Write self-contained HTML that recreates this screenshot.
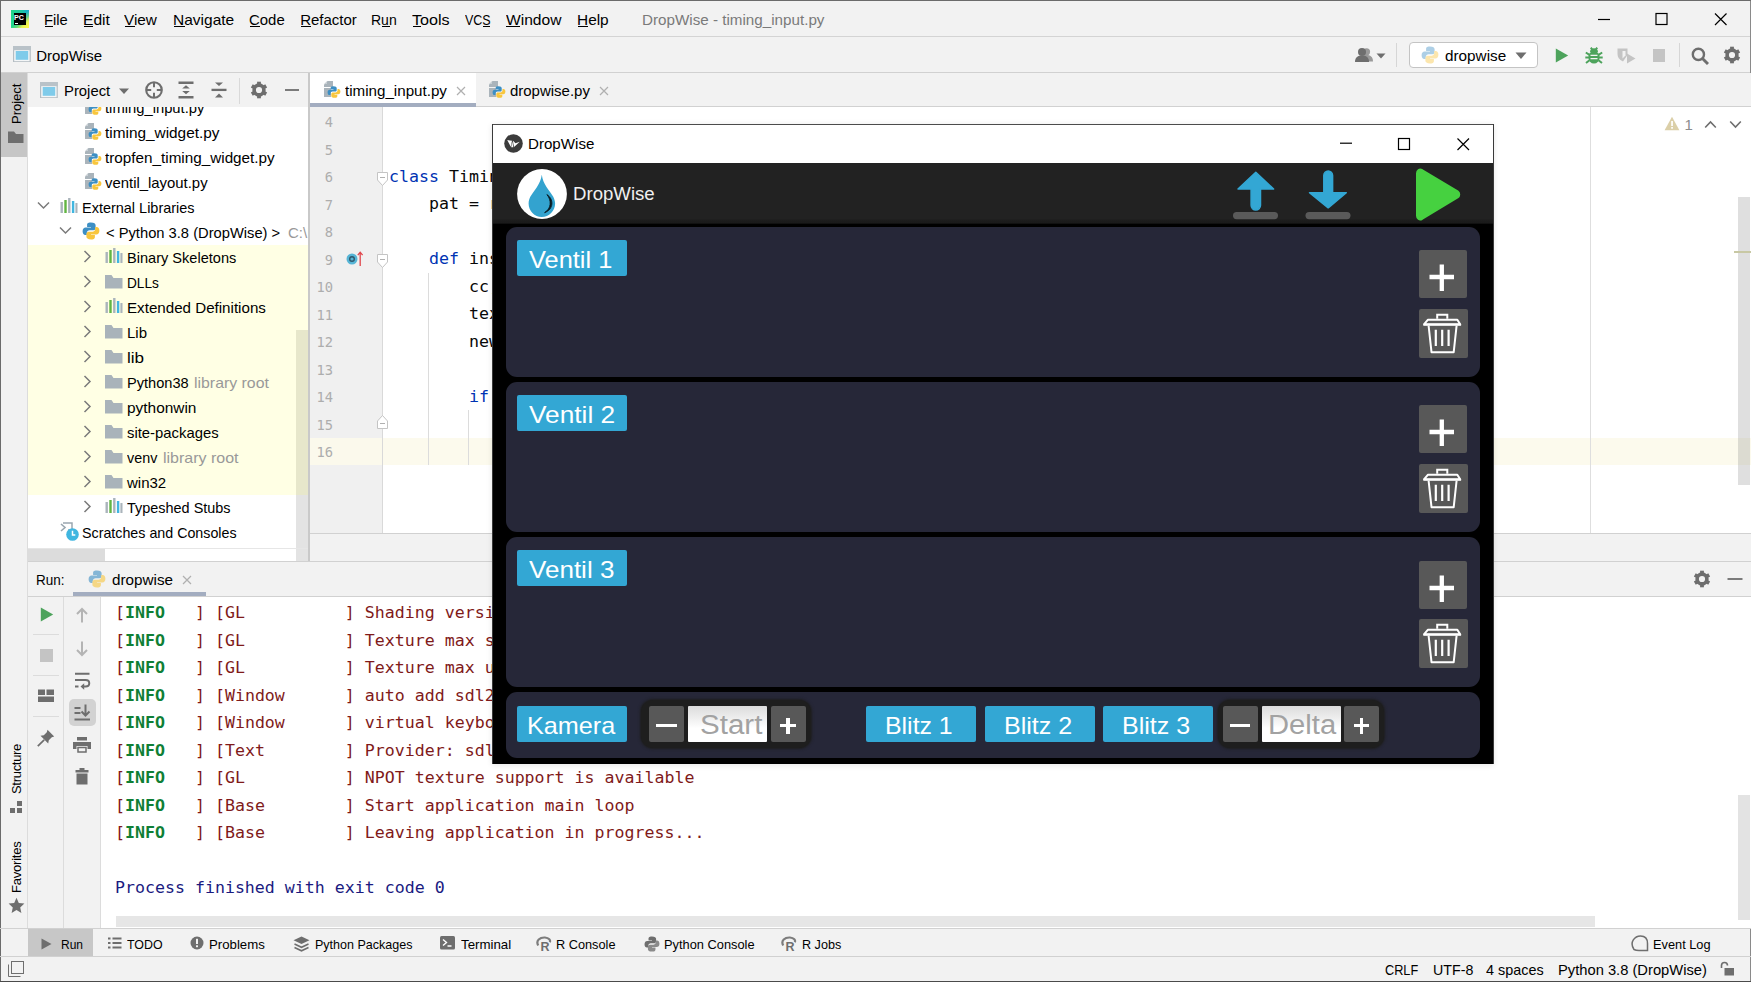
<!DOCTYPE html>
<html lang="en"><head><meta charset="utf-8"><title>DropWise - timing_input.py</title>
<style>
*{margin:0;padding:0;box-sizing:border-box}
html,body{width:1751px;height:982px;overflow:hidden;background:#f2f2f2}
body{font-family:"Liberation Sans", sans-serif;font-size:15px;color:#000;position:relative}
#root{position:absolute;left:0;top:0;width:1751px;height:982px;overflow:hidden;background:#f2f2f2}
#root div,#root svg,#root span.t,#root pre{position:absolute;display:block}
span.t{white-space:pre;transform-origin:0 0}
pre{font-family:"DejaVu Sans Mono", "Liberation Mono", monospace;white-space:pre}
u{text-decoration:underline;text-underline-offset:2px;text-decoration-thickness:1px}
</style></head>
<body><div id="root">
<div style="left:0px;top:0px;width:1751px;height:982px;background:#f2f2f2;"></div>
<div style="left:0px;top:36px;width:1751px;height:1px;background:#d4d4d4;"></div>
<div style="left:0px;top:72px;width:1751px;height:1px;background:#d1d1d1;"></div>
<div style="left:11px;top:10px;width:18px;height:18px;background:linear-gradient(90deg,#21d789,#1fc8a0 60%,#10a7d8);"></div>
<div style="left:11px;top:10px;width:18px;height:18px;background:linear-gradient(315deg,#fcf84a 8%,rgba(252,248,74,.9) 22%,rgba(155,224,90,.55) 36%,rgba(33,215,137,0) 52%);"></div>
<div style="left:13.6px;top:12.8px;width:12.7px;height:12.5px;background:#000;"></div>
<span class="t" style="left:14.40px;top:14.28px;font-size:7px;line-height:7px;color:#fff;font-weight:bold;transform:scaleX(1.0170);">PC</span>
<div style="left:14.9px;top:22.8px;width:3.6px;height:0.9px;background:#fff;"></div>
<span class="t" style="left:44.40px;top:12.31px;font-size:15px;line-height:15px;color:#000;transform:scaleX(0.9805);">File</span>
<div style="left:45px;top:26.3px;width:8px;height:1px;background:#000;"></div>
<span class="t" style="left:83.15px;top:12.31px;font-size:15px;line-height:15px;color:#000;transform:scaleX(1.0422);">Edit</span>
<div style="left:83.5px;top:26.3px;width:9.5px;height:1px;background:#000;"></div>
<span class="t" style="left:124.40px;top:12.31px;font-size:15px;line-height:15px;color:#000;transform:scaleX(1.0217);">View</span>
<div style="left:125px;top:26.3px;width:10px;height:1px;background:#000;"></div>
<span class="t" style="left:172.65px;top:12.31px;font-size:15px;line-height:15px;color:#000;transform:scaleX(1.0337);">Navigate</span>
<div style="left:173.5px;top:26.3px;width:11.5px;height:1px;background:#000;"></div>
<span class="t" style="left:249.40px;top:12.31px;font-size:15px;line-height:15px;color:#000;transform:scaleX(0.9956);">Code</span>
<div style="left:250px;top:26.3px;width:10px;height:1px;background:#000;"></div>
<span class="t" style="left:300.15px;top:12.31px;font-size:15px;line-height:15px;color:#000;">Refactor</span>
<div style="left:301px;top:26.3px;width:9.5px;height:1px;background:#000;"></div>
<span class="t" style="left:371.40px;top:12.31px;font-size:15px;line-height:15px;color:#000;transform:scaleX(0.9335);">Run</span>
<div style="left:381.75px;top:26.3px;width:8.25px;height:1px;background:#000;"></div>
<span class="t" style="left:412.40px;top:12.31px;font-size:15px;line-height:15px;color:#000;transform:scaleX(1.0762);">Tools</span>
<div style="left:413px;top:26.3px;width:8.25px;height:1px;background:#000;"></div>
<span class="t" style="left:464.90px;top:12.31px;font-size:15px;line-height:15px;color:#000;transform:scaleX(0.8332);">VCS</span>
<div style="left:482.5px;top:26.3px;width:7.5px;height:1px;background:#000;"></div>
<span class="t" style="left:505.65px;top:12.31px;font-size:15px;line-height:15px;color:#000;transform:scaleX(1.0392);">Window</span>
<div style="left:506.25px;top:26.3px;width:13.75px;height:1px;background:#000;"></div>
<span class="t" style="left:576.90px;top:12.31px;font-size:15px;line-height:15px;color:#000;transform:scaleX(1.0272);">Help</span>
<div style="left:577.5px;top:26.3px;width:10.0px;height:1px;background:#000;"></div>
<span class="t" style="left:641.90px;top:12.31px;font-size:15px;line-height:15px;color:#7a7a7a;transform:scaleX(1.0132);">DropWise - timing_input.py</span>
<svg style="left:1592px;top:8px;" width="24" height="24" viewBox="0 0 24 24"><path d="M6 11.5H18" stroke="#000" stroke-width="1.2"/></svg>
<svg style="left:1649px;top:7px;" width="24" height="24" viewBox="0 0 24 24"><rect x="7" y="6.5" width="11" height="11" fill="none" stroke="#000" stroke-width="1.2"/></svg>
<svg style="left:1708px;top:7px;" width="24" height="24" viewBox="0 0 24 24"><path d="M7 6.5L18.5 18M18.5 6.5L7 18" stroke="#000" stroke-width="1.2"/></svg>
<svg style="left:13px;top:46px;" width="18" height="16" viewBox="0 0 18 16"><rect x="0.600" y="0.600" width="16.600" height="15.200" fill="#f4f6f7" stroke="#b4bdc3" stroke-width="1.200"/><rect x="0" y="0" width="17.800" height="4.200" fill="#b9c2c8"/><rect x="2.700" y="5" width="12.500" height="8.800" fill="#7fcbea"/></svg>
<span class="t" style="left:36.15px;top:48.06px;font-size:15px;line-height:15px;color:#000;">DropWise</span>
<svg style="left:1355px;top:47px;" width="32" height="16" viewBox="0 0 32 16"><circle cx="11.500" cy="4.800" r="3.600" fill="#9a9a9a"/><path d="M5 14.500C5 9.500 8 8 11.500 8C15 8 18 9.500 18 14.500Z" fill="#9a9a9a"/><circle cx="7" cy="5" r="4" fill="#6e6e6e"/><path d="M0 15C0 10 3 8.500 7 8.500C11 8.500 14 10 14 15Z" fill="#6e6e6e"/><path d="M21.500 6.500H30.500L26 11.500Z" fill="#6e6e6e"/></svg>
<div style="left:1396px;top:42.5px;width:1px;height:24px;background:#d6d6d6;"></div>
<div style="left:1408.5px;top:41.8px;width:129.5px;height:26.3px;background:#fff;border:1px solid #c4c4c4;border-radius:4px;"></div>
<svg style="left:1421px;top:46px;opacity:.42" width="18" height="18" viewBox="0 0 18 18"><path d="M8.800 0.500c-3.400 0-3.700 1.400-3.700 2.700v1.800h3.900v.6H3.600C1.900 5.600.600 6.900.600 9.300s1.200 3.700 2.700 3.700h1.500v-2.100c0-1.500 1.300-2.700 2.800-2.700h3.800c1.200 0 2.200-1 2.200-2.300V3.200c0-1.300-1.300-2.700-4.800-2.700z" fill="#3d8fc4"/><path d="M9.200 17.500c3.400 0 3.700-1.400 3.700-2.700v-1.800H9v-.6h5.400c1.700 0 3-1.300 3-3.700s-1.200-3.700-2.700-3.700h-1.500v2.100c0 1.500-1.300 2.700-2.800 2.700H6.600c-1.200 0-2.200 1-2.200 2.300v2.700c0 1.300 1.300 2.700 4.800 2.700z" fill="#f8c63d"/></svg>
<span class="t" style="left:1444.90px;top:48.06px;font-size:15px;line-height:15px;color:#000;transform:scaleX(1.0195);">dropwise</span>
<svg style="left:1515px;top:52px;" width="12" height="8" viewBox="0 0 12 8"><path d="M0.500 0.500H11.500L6 7Z" fill="#6e6e6e"/></svg>
<svg style="left:1555px;top:47.5px;" width="14" height="15" viewBox="0 0 14 15"><path d="M0.800 0.500L13.200 7.500L0.800 14.500Z" fill="#4da35c"/></svg>
<svg style="left:1585px;top:46.5px;" width="18" height="17" viewBox="0 0 18 17"><g fill="#4da35c"><ellipse cx="9" cy="10.200" rx="5.600" ry="6.300"/><path d="M5 5A4 3.800 0 0 1 13 5Z"/></g><path d="M0.800 5.500L4.500 7.800M17.200 5.500L13.500 7.800M0.300 10.500H4M17.700 10.500H14M1 16L4.500 13.300M17 16L13.500 13.300M5.800 0.600L7.200 2.500M12.200 0.600L10.800 2.500" stroke="#4da35c" stroke-width="2" fill="none"/><path d="M5.500 8.300H12.500M5.500 11.600H12.500" stroke="#f2f2f2" stroke-width="1.300"/></svg>
<svg style="left:1616px;top:47px;" width="21" height="17" viewBox="0 0 21 17"><path d="M1.500 1.500H11.500V8L7 14.500C3 12.500 1.500 10 1.500 7Z" fill="#c4c4c4"/><path d="M6.500 4H9.500V8.500L6.500 11.500Z" fill="#f2f2f2"/><path d="M11 6.500L19.500 11.500L11 16.500Z" fill="#c4c4c4"/></svg>
<div style="left:1652.5px;top:49px;width:12.5px;height:12.5px;background:#c4c4c4;"></div>
<div style="left:1679px;top:42.5px;width:1px;height:24px;background:#d6d6d6;"></div>
<svg style="left:1690.5px;top:46.5px;" width="18" height="18" viewBox="0 0 18 18"><circle cx="7.400" cy="7.400" r="5.600" fill="none" stroke="#6e6e6e" stroke-width="2.400"/><path d="M11.500 11.500L17 17" stroke="#6e6e6e" stroke-width="2.900"/></svg>
<svg style="left:1722.5px;top:46px;" width="18" height="18" viewBox="0 0 18 18"><g transform="translate(9,9) scale(1)"><circle r="4.900" fill="none" stroke="#6e6e6e" stroke-width="3.600"/><g fill="#6e6e6e"><rect x="-1.900" y="-8.300" width="3.800" height="3.400"/><rect x="-1.900" y="4.900" width="3.800" height="3.400"/><rect x="-1.900" y="-8.300" width="3.800" height="3.400" transform="rotate(60)"/><rect x="-1.900" y="4.900" width="3.800" height="3.400" transform="rotate(60)"/><rect x="-1.900" y="-8.300" width="3.800" height="3.400" transform="rotate(120)"/><rect x="-1.900" y="4.900" width="3.800" height="3.400" transform="rotate(120)"/></g></g></svg>
<div style="left:0px;top:73px;width:28px;height:884px;background:#f2f2f2;"></div>
<div style="left:27px;top:73px;width:1px;height:884px;background:#dcdcdc;"></div>
<div style="left:0px;top:73px;width:27px;height:84px;background:#c6c6c6;"></div>
<div style="left:0px;top:0px;width:1px;height:982px;background:#6b6b6b;"></div>
<div style="left:1750px;top:0px;width:1px;height:982px;background:#8a8a8a;"></div>
<div style="left:0px;top:0px;width:1751px;height:1px;background:#6b6b6b;"></div>
<div style="left:0px;top:981px;width:1751px;height:1px;background:#4a4a4a;"></div>
<span class="t" style="left:16.5px;top:124px;font-size:13px;line-height:13px;color:#000;transform-origin:0 0;transform:rotate(-90deg) translate(0,-6.8px);letter-spacing:0px">Project</span>
<svg style="left:8px;top:130px;" width="16" height="14" viewBox="0 0 16 14"><path d="M0 1.5H6L8 4H15.5V13H0Z" fill="#6e6e6e"/></svg>
<span class="t" style="left:16.5px;top:793.5px;font-size:13px;line-height:13px;color:#000;transform-origin:0 0;transform:rotate(-90deg) translate(0,-6.8px);letter-spacing:-0.3px">Structure</span>
<svg style="left:9px;top:800px;" width="15" height="14" viewBox="0 0 15 14"><rect x="8" y="1" width="5" height="5" fill="#6e6e6e"/><rect x="1" y="8" width="5" height="5" fill="#6e6e6e"/><rect x="8" y="8" width="5" height="5" fill="#6e6e6e"/></svg>
<span class="t" style="left:16.5px;top:893px;font-size:13px;line-height:13px;color:#000;transform-origin:0 0;transform:rotate(-90deg) translate(0,-6.8px);letter-spacing:-0.22px">Favorites</span>
<svg style="left:8px;top:897px;" width="17" height="17" viewBox="0 0 17 17"><path d="M8.5 0.8l2.3 5.2 5.6.6-4.2 3.8 1.2 5.6-4.9-2.9-4.9 2.9 1.2-5.6L.6 6.6l5.6-.6z" fill="#6e6e6e"/></svg>
<div style="left:28px;top:73px;width:280px;height:34px;background:#f2f2f2;"></div>
<div style="left:28px;top:107px;width:280px;height:441px;background:#fff;"></div>
<div style="left:28px;top:244.5px;width:280px;height:250px;background:#ffffe4;"></div>
<div style="left:308px;top:73px;width:2px;height:488px;background:#c9c9c9;"></div>
<svg style="left:40px;top:82px;" width="18" height="16" viewBox="0 0 18 16"><rect x="0.600" y="0.600" width="16.600" height="15.200" fill="#f4f6f7" stroke="#b4bdc3" stroke-width="1.200"/><rect x="0" y="0" width="17.800" height="4.200" fill="#b9c2c8"/><rect x="2.700" y="5" width="12.500" height="8.800" fill="#7fcbea"/></svg>
<span class="t" style="left:63.90px;top:83.06px;font-size:15px;line-height:15px;color:#000;transform:scaleX(0.9896);">Project</span>
<svg style="left:118px;top:87px;" width="12" height="8" viewBox="0 0 12 8"><path d="M1 1.5H11L6 7Z" fill="#6e6e6e"/></svg>
<svg style="left:145px;top:81px;" width="18" height="18" viewBox="0 0 18 18"><circle cx="9" cy="9" r="7.800" fill="none" stroke="#6e6e6e" stroke-width="2.100"/><path d="M9 1V6.200M9 11.800V17M1 9H6.200M11.800 9H17" stroke="#6e6e6e" stroke-width="2"/></svg>
<svg style="left:178px;top:81px;" width="16" height="18" viewBox="0 0 16 18"><path d="M0.500 1.750H15.500M0.500 16.250H15.500" stroke="#6e6e6e" stroke-width="2.500"/><path d="M8 4.300L11.800 7.600H4.200Z M8 13.200L11.800 9.900H4.200Z" fill="#6e6e6e"/></svg>
<svg style="left:211px;top:81px;" width="16" height="18" viewBox="0 0 16 18"><path d="M0.500 8.900H15.500" stroke="#6e6e6e" stroke-width="2.300"/><path d="M8 5L12 1.500H4Z M8 12.500L12 16.500H4Z" fill="#6e6e6e"/></svg>
<div style="left:239px;top:77.5px;width:1px;height:26px;background:#d9d9d9;"></div>
<svg style="left:250px;top:81px;" width="18" height="18" viewBox="0 0 18 18"><g transform="translate(9,9) scale(1)"><circle r="4.900" fill="none" stroke="#6e6e6e" stroke-width="3.600"/><g fill="#6e6e6e"><rect x="-1.900" y="-8.300" width="3.800" height="3.400"/><rect x="-1.900" y="4.900" width="3.800" height="3.400"/><rect x="-1.900" y="-8.300" width="3.800" height="3.400" transform="rotate(60)"/><rect x="-1.900" y="4.900" width="3.800" height="3.400" transform="rotate(60)"/><rect x="-1.900" y="-8.300" width="3.800" height="3.400" transform="rotate(120)"/><rect x="-1.900" y="4.900" width="3.800" height="3.400" transform="rotate(120)"/></g></g></svg>
<svg style="left:284px;top:82px;" width="16" height="16" viewBox="0 0 16 16"><path d="M1 8H15" stroke="#6e6e6e" stroke-width="1.8"/></svg>
<div style="left:28px;top:107px;width:268px;height:13px;overflow:hidden"><svg style="left:57px;top:-9.5px" width="18" height="18" viewBox="0 0 18 18"><path d="M3.5 0H9V6H0V3.5Z" fill="#aab4bb"/><path d="M0 7H7V16H0Z" fill="#aab4bb"/><path d="M3 0.3L0.3 3H3Z" fill="#c9d0d5"/><path d="M9.3 5.2c-2.4 0-2.6 1-2.6 1.9v1.2h2.8v.5H5.6c-1.2 0-2 .9-2 2.6s.8 2.6 1.9 2.6h1v-1.5c0-1 .9-1.9 2-1.9h2.6c.9 0 1.6-.7 1.6-1.6V7.1c0-.9-.9-1.9-3.400-1.900z" fill="#3d8fc4"/><path d="M10.700 16.800c2.4 0 2.600-1 2.600-1.900v-1.200h-2.800v-.5h3.900c1.200 0 2-.9 2-2.600s-.8-2.600-1.900-2.600h-1v1.500c0 1-.9 1.900-2 1.900H8.900c-.9 0-1.600.7-1.600 1.600v1.900c0 .9.900 1.900 3.400 1.900z" fill="#f8c63d"/></svg><span class="t" style="left:77px;top:-7.4px;font-size:15px;line-height:15px;transform:scaleX(0.985)">timing_input.py</span></div>
<svg style="left:85px;top:122.5px;" width="18" height="18" viewBox="0 0 18 18"><path d="M3.5 0H9V6H0V3.5Z" fill="#aab4bb"/><path d="M0 7H7V16H0Z" fill="#aab4bb"/><path d="M3 0.3L0.3 3H3Z" fill="#c9d0d5"/><path d="M9.3 5.2c-2.4 0-2.6 1-2.6 1.9v1.2h2.8v.5H5.6c-1.2 0-2 .9-2 2.6s.8 2.6 1.9 2.6h1v-1.5c0-1 .9-1.9 2-1.9h2.6c.9 0 1.6-.7 1.6-1.6V7.1c0-.9-.9-1.9-3.400-1.900z" fill="#3d8fc4"/><path d="M10.700 16.800c2.4 0 2.600-1 2.600-1.900v-1.200h-2.800v-.5h3.900c1.200 0 2-.9 2-2.600s-.8-2.600-1.900-2.600h-1v1.500c0 1-.9 1.900-2 1.900H8.900c-.9 0-1.600.7-1.600 1.600v1.900c0 .9.900 1.900 3.400 1.900z" fill="#f8c63d"/></svg>
<span class="t" style="left:104.90px;top:124.61px;font-size:15px;line-height:15px;color:#000;transform:scaleX(1.0248);">timing_widget.py</span>
<svg style="left:85px;top:147.5px;" width="18" height="18" viewBox="0 0 18 18"><path d="M3.5 0H9V6H0V3.5Z" fill="#aab4bb"/><path d="M0 7H7V16H0Z" fill="#aab4bb"/><path d="M3 0.3L0.3 3H3Z" fill="#c9d0d5"/><path d="M9.3 5.2c-2.4 0-2.6 1-2.6 1.9v1.2h2.8v.5H5.6c-1.2 0-2 .9-2 2.6s.8 2.6 1.9 2.6h1v-1.5c0-1 .9-1.9 2-1.9h2.6c.9 0 1.6-.7 1.6-1.6V7.1c0-.9-.9-1.9-3.400-1.900z" fill="#3d8fc4"/><path d="M10.700 16.800c2.4 0 2.600-1 2.600-1.900v-1.200h-2.800v-.5h3.900c1.200 0 2-.9 2-2.600s-.8-2.600-1.900-2.600h-1v1.500c0 1-.9 1.900-2 1.900H8.900c-.9 0-1.600.7-1.600 1.600v1.900c0 .9.900 1.900 3.400 1.900z" fill="#f8c63d"/></svg>
<span class="t" style="left:104.90px;top:149.61px;font-size:15px;line-height:15px;color:#000;transform:scaleX(1.0176);">tropfen_timing_widget.py</span>
<svg style="left:85px;top:172.5px;" width="18" height="18" viewBox="0 0 18 18"><path d="M3.5 0H9V6H0V3.5Z" fill="#aab4bb"/><path d="M0 7H7V16H0Z" fill="#aab4bb"/><path d="M3 0.3L0.3 3H3Z" fill="#c9d0d5"/><path d="M9.3 5.2c-2.4 0-2.6 1-2.6 1.9v1.2h2.8v.5H5.6c-1.2 0-2 .9-2 2.6s.8 2.6 1.9 2.6h1v-1.5c0-1 .9-1.9 2-1.9h2.6c.9 0 1.6-.7 1.6-1.6V7.1c0-.9-.9-1.9-3.400-1.900z" fill="#3d8fc4"/><path d="M10.700 16.800c2.4 0 2.600-1 2.600-1.900v-1.200h-2.800v-.5h3.900c1.200 0 2-.9 2-2.600s-.8-2.600-1.900-2.600h-1v1.500c0 1-.9 1.900-2 1.900H8.900c-.9 0-1.600.7-1.600 1.600v1.900c0 .9.900 1.900 3.400 1.900z" fill="#f8c63d"/></svg>
<span class="t" style="left:104.90px;top:174.61px;font-size:15px;line-height:15px;color:#000;transform:scaleX(0.9922);">ventil_layout.py</span>
<svg style="left:37px;top:201.0px;" width="13" height="9" viewBox="0 0 13 9"><path d="M1 1.500L6.500 7L12 1.500" fill="none" stroke="#7a7a7a" stroke-width="1.500"/></svg>
<svg style="left:60px;top:198.0px;" width="18" height="15" viewBox="0 0 18 15"><rect x="0.5" y="4" width="2.4" height="11" fill="#aab4bb"/><rect x="4.3" y="2" width="2.400" height="13" fill="#62b543"/><rect x="8.100" y="0" width="2.400" height="15" fill="#aab4bb"/><rect x="11.900" y="3" width="2.400" height="12" fill="#40b6e0"/><rect x="15.400" y="5" width="2.100" height="10" fill="#aab4bb"/></svg>
<span class="t" style="left:82.40px;top:199.61px;font-size:15px;line-height:15px;color:#000;transform:scaleX(0.9647);">External Libraries</span>
<svg style="left:58.5px;top:226.0px;" width="13" height="9" viewBox="0 0 13 9"><path d="M1 1.500L6.500 7L12 1.500" fill="none" stroke="#7a7a7a" stroke-width="1.500"/></svg>
<svg style="left:82px;top:222.0px;" width="18" height="18" viewBox="0 0 18 18"><path d="M8.800 0.500c-3.400 0-3.700 1.400-3.700 2.700v1.800h3.900v.6H3.600C1.900 5.600.600 6.900.600 9.300s1.200 3.700 2.700 3.700h1.500v-2.100c0-1.500 1.300-2.700 2.800-2.700h3.800c1.200 0 2.200-1 2.200-2.300V3.200c0-1.300-1.300-2.700-4.800-2.700z" fill="#3d8fc4"/><path d="M9.200 17.500c3.400 0 3.700-1.400 3.700-2.700v-1.800H9v-.6h5.400c1.700 0 3-1.300 3-3.700s-1.200-3.700-2.700-3.700h-1.500v2.100c0 1.500-1.300 2.700-2.800 2.700H6.600c-1.200 0-2.200 1-2.200 2.300v2.700c0 1.300 1.300 2.700 4.800 2.700z" fill="#f8c63d"/></svg>
<span class="t" style="left:106.10px;top:224.61px;font-size:15px;line-height:15px;color:#000;transform:scaleX(0.9810);">&lt; Python 3.8 (DropWise) &gt;</span>
<div style="left:286px;top:219.5px;width:22px;height:25px;overflow:hidden"><span class="t" style="left:2px;top:5.1px;font-size:15px;line-height:15px;color:#999">C:\Users</span></div>
<svg style="left:83px;top:250.0px;" width="9" height="13" viewBox="0 0 9 13"><path d="M1.5 1L7 6.500L1.500 12" fill="none" stroke="#7a7a7a" stroke-width="1.5"/></svg>
<svg style="left:105px;top:248.0px;" width="18" height="15" viewBox="0 0 18 15"><rect x="0.5" y="4" width="2.4" height="11" fill="#aab4bb"/><rect x="4.3" y="2" width="2.400" height="13" fill="#62b543"/><rect x="8.100" y="0" width="2.400" height="15" fill="#aab4bb"/><rect x="11.900" y="3" width="2.400" height="12" fill="#40b6e0"/><rect x="15.400" y="5" width="2.100" height="10" fill="#aab4bb"/></svg>
<span class="t" style="left:127.00px;top:249.61px;font-size:15px;line-height:15px;color:#000;transform:scaleX(0.9710);">Binary Skeletons</span>
<svg style="left:83px;top:275.0px;" width="9" height="13" viewBox="0 0 9 13"><path d="M1.5 1L7 6.500L1.500 12" fill="none" stroke="#7a7a7a" stroke-width="1.5"/></svg>
<svg style="left:105px;top:273.5px;" width="18" height="15" viewBox="0 0 18 15"><path d="M0 1H6.5L8.500 4H17.500V14.500H0Z" fill="#a9b3ba"/></svg>
<span class="t" style="left:127.00px;top:274.61px;font-size:15px;line-height:15px;color:#000;transform:scaleX(0.9106);">DLLs</span>
<svg style="left:83px;top:300.0px;" width="9" height="13" viewBox="0 0 9 13"><path d="M1.5 1L7 6.500L1.500 12" fill="none" stroke="#7a7a7a" stroke-width="1.5"/></svg>
<svg style="left:105px;top:298.0px;" width="18" height="15" viewBox="0 0 18 15"><rect x="0.5" y="4" width="2.4" height="11" fill="#aab4bb"/><rect x="4.3" y="2" width="2.400" height="13" fill="#62b543"/><rect x="8.100" y="0" width="2.400" height="15" fill="#aab4bb"/><rect x="11.900" y="3" width="2.400" height="12" fill="#40b6e0"/><rect x="15.400" y="5" width="2.100" height="10" fill="#aab4bb"/></svg>
<span class="t" style="left:127.00px;top:299.61px;font-size:15px;line-height:15px;color:#000;transform:scaleX(1.0095);">Extended Definitions</span>
<svg style="left:83px;top:325.0px;" width="9" height="13" viewBox="0 0 9 13"><path d="M1.5 1L7 6.500L1.500 12" fill="none" stroke="#7a7a7a" stroke-width="1.5"/></svg>
<svg style="left:105px;top:323.5px;" width="18" height="15" viewBox="0 0 18 15"><path d="M0 1H6.5L8.500 4H17.500V14.500H0Z" fill="#a9b3ba"/></svg>
<span class="t" style="left:127.00px;top:324.61px;font-size:15px;line-height:15px;color:#000;">Lib</span>
<svg style="left:83px;top:350.0px;" width="9" height="13" viewBox="0 0 9 13"><path d="M1.5 1L7 6.500L1.500 12" fill="none" stroke="#7a7a7a" stroke-width="1.5"/></svg>
<svg style="left:105px;top:348.5px;" width="18" height="15" viewBox="0 0 18 15"><path d="M0 1H6.5L8.500 4H17.500V14.500H0Z" fill="#a9b3ba"/></svg>
<span class="t" style="left:127.00px;top:349.61px;font-size:15px;line-height:15px;color:#000;transform:scaleX(1.1388);">lib</span>
<svg style="left:83px;top:375.0px;" width="9" height="13" viewBox="0 0 9 13"><path d="M1.5 1L7 6.500L1.500 12" fill="none" stroke="#7a7a7a" stroke-width="1.5"/></svg>
<svg style="left:105px;top:373.5px;" width="18" height="15" viewBox="0 0 18 15"><path d="M0 1H6.5L8.500 4H17.500V14.500H0Z" fill="#a9b3ba"/></svg>
<span class="t" style="left:127.00px;top:374.61px;font-size:15px;line-height:15px;color:#000;transform:scaleX(0.9718);">Python38</span>
<span class="t" style="left:194.40px;top:374.61px;font-size:15px;line-height:15px;color:#999;transform:scaleX(1.0570);">library root</span>
<svg style="left:83px;top:400.0px;" width="9" height="13" viewBox="0 0 9 13"><path d="M1.5 1L7 6.500L1.500 12" fill="none" stroke="#7a7a7a" stroke-width="1.5"/></svg>
<svg style="left:105px;top:398.5px;" width="18" height="15" viewBox="0 0 18 15"><path d="M0 1H6.5L8.500 4H17.500V14.500H0Z" fill="#a9b3ba"/></svg>
<span class="t" style="left:127.00px;top:399.61px;font-size:15px;line-height:15px;color:#000;transform:scaleX(1.0274);">pythonwin</span>
<svg style="left:83px;top:425.0px;" width="9" height="13" viewBox="0 0 9 13"><path d="M1.5 1L7 6.500L1.500 12" fill="none" stroke="#7a7a7a" stroke-width="1.5"/></svg>
<svg style="left:105px;top:423.5px;" width="18" height="15" viewBox="0 0 18 15"><path d="M0 1H6.5L8.500 4H17.500V14.500H0Z" fill="#a9b3ba"/></svg>
<span class="t" style="left:127.00px;top:424.61px;font-size:15px;line-height:15px;color:#000;transform:scaleX(0.9896);">site-packages</span>
<svg style="left:83px;top:450.0px;" width="9" height="13" viewBox="0 0 9 13"><path d="M1.5 1L7 6.500L1.500 12" fill="none" stroke="#7a7a7a" stroke-width="1.5"/></svg>
<svg style="left:105px;top:448.5px;" width="18" height="15" viewBox="0 0 18 15"><path d="M0 1H6.5L8.500 4H17.500V14.500H0Z" fill="#a9b3ba"/></svg>
<span class="t" style="left:127.00px;top:449.61px;font-size:15px;line-height:15px;color:#000;transform:scaleX(0.9562);">venv</span>
<span class="t" style="left:163.40px;top:449.61px;font-size:15px;line-height:15px;color:#999;transform:scaleX(1.0655);">library root</span>
<svg style="left:83px;top:475.0px;" width="9" height="13" viewBox="0 0 9 13"><path d="M1.5 1L7 6.500L1.500 12" fill="none" stroke="#7a7a7a" stroke-width="1.5"/></svg>
<svg style="left:105px;top:473.5px;" width="18" height="15" viewBox="0 0 18 15"><path d="M0 1H6.5L8.500 4H17.500V14.500H0Z" fill="#a9b3ba"/></svg>
<span class="t" style="left:127.00px;top:474.61px;font-size:15px;line-height:15px;color:#000;">win32</span>
<svg style="left:83px;top:500.0px;" width="9" height="13" viewBox="0 0 9 13"><path d="M1.5 1L7 6.500L1.500 12" fill="none" stroke="#7a7a7a" stroke-width="1.5"/></svg>
<svg style="left:105px;top:498.0px;" width="18" height="15" viewBox="0 0 18 15"><rect x="0.5" y="4" width="2.4" height="11" fill="#aab4bb"/><rect x="4.3" y="2" width="2.400" height="13" fill="#62b543"/><rect x="8.100" y="0" width="2.400" height="15" fill="#aab4bb"/><rect x="11.900" y="3" width="2.400" height="12" fill="#40b6e0"/><rect x="15.400" y="5" width="2.100" height="10" fill="#aab4bb"/></svg>
<span class="t" style="left:127.00px;top:499.61px;font-size:15px;line-height:15px;color:#000;transform:scaleX(0.9630);">Typeshed Stubs</span>
<svg style="left:60px;top:521.5px;" width="20" height="20" viewBox="0 0 20 20"><path d="M1 2L5 5.500L1 9" fill="none" stroke="#9aa7b0" stroke-width="1.600"/><path d="M3 1H12V8H8" fill="none" stroke="#9aa7b0" stroke-width="1.500"/><circle cx="12.500" cy="12.500" r="6.300" fill="#40b6e0"/><path d="M12.500 8.800V13H15.300" fill="none" stroke="#fff" stroke-width="1.500"/></svg>
<span class="t" style="left:81.70px;top:524.61px;font-size:15px;line-height:15px;color:#000;transform:scaleX(0.9508);">Scratches and Consoles</span>
<div style="left:296px;top:330px;width:12px;height:164.5px;background:rgba(120,120,90,0.18);"></div>
<div style="left:296px;top:494.5px;width:12px;height:66.5px;background:#e3e3e3;"></div>
<div style="left:28px;top:548px;width:268px;height:13px;background:#fff;"></div>
<div style="left:28px;top:549px;width:77px;height:11.5px;background:#dcdcdc;"></div>
<div style="left:28px;top:548px;width:280px;height:1px;background:#e6e6e6;"></div>
<div style="left:310px;top:73px;width:1441px;height:34px;background:#f2f2f2;"></div>
<div style="left:310px;top:106px;width:1441px;height:1px;background:#d1d1d1;"></div>
<div style="left:310px;top:73px;width:166px;height:30px;background:#fff;"></div>
<div style="left:310px;top:103px;width:166px;height:4px;background:#a3adc0;"></div>
<svg style="left:323.5px;top:81px;" width="18" height="18" viewBox="0 0 18 18"><path d="M3.5 0H9V6H0V3.5Z" fill="#aab4bb"/><path d="M0 7H7V16H0Z" fill="#aab4bb"/><path d="M3 0.3L0.3 3H3Z" fill="#c9d0d5"/><path d="M9.3 5.2c-2.4 0-2.6 1-2.6 1.9v1.2h2.8v.5H5.6c-1.2 0-2 .9-2 2.6s.8 2.6 1.9 2.6h1v-1.5c0-1 .9-1.9 2-1.9h2.6c.9 0 1.6-.7 1.6-1.6V7.1c0-.9-.9-1.9-3.400-1.900z" fill="#3d8fc4"/><path d="M10.700 16.800c2.4 0 2.600-1 2.600-1.900v-1.200h-2.800v-.5h3.900c1.200 0 2-.9 2-2.600s-.8-2.600-1.900-2.600h-1v1.500c0 1-.9 1.900-2 1.900H8.900c-.9 0-1.600.7-1.600 1.600v1.900c0 .9.900 1.900 3.400 1.900z" fill="#f8c63d"/></svg>
<span class="t" style="left:344.90px;top:83.06px;font-size:15px;line-height:15px;color:#000;transform:scaleX(1.0103);">timing_input.py</span>
<svg style="left:455.5px;top:85.5px;" width="10" height="10" viewBox="0 0 10 10"><path d="M1 1L9 9M9 1L1 9" stroke="#b0b0b0" stroke-width="1.200"/></svg>
<svg style="left:488.5px;top:81px;" width="18" height="18" viewBox="0 0 18 18"><path d="M3.5 0H9V6H0V3.5Z" fill="#aab4bb"/><path d="M0 7H7V16H0Z" fill="#aab4bb"/><path d="M3 0.3L0.3 3H3Z" fill="#c9d0d5"/><path d="M9.3 5.2c-2.4 0-2.6 1-2.6 1.9v1.2h2.8v.5H5.6c-1.2 0-2 .9-2 2.6s.8 2.6 1.9 2.6h1v-1.5c0-1 .9-1.9 2-1.9h2.6c.9 0 1.6-.7 1.6-1.6V7.1c0-.9-.9-1.9-3.400-1.900z" fill="#3d8fc4"/><path d="M10.700 16.800c2.4 0 2.600-1 2.600-1.900v-1.200h-2.800v-.5h3.900c1.200 0 2-.9 2-2.600s-.8-2.600-1.900-2.600h-1v1.500c0 1-.9 1.900-2 1.900H8.900c-.9 0-1.600.7-1.600 1.600v1.900c0 .9.900 1.900 3.400 1.900z" fill="#f8c63d"/></svg>
<span class="t" style="left:509.90px;top:83.06px;font-size:15px;line-height:15px;color:#000;">dropwise.py</span>
<svg style="left:598.5px;top:85.5px;" width="10" height="10" viewBox="0 0 10 10"><path d="M1 1L9 9M9 1L1 9" stroke="#b0b0b0" stroke-width="1.200"/></svg>
<div style="left:310px;top:107px;width:1441px;height:426px;background:#fff;"></div>
<div style="left:310px;top:107px;width:72px;height:426px;background:#f0f0f0;"></div>
<div style="left:382px;top:107px;width:1px;height:426px;background:#d9d9d9;"></div>
<div style="left:310px;top:437.5px;width:72px;height:27.5px;background:#fbf9ec;"></div>
<div style="left:383px;top:437.5px;width:1368px;height:27.5px;background:#fcfaed;"></div>
<div style="left:1589.5px;top:107px;width:1px;height:426px;background:#dedede;"></div>
<div style="left:427.5px;top:272.5px;width:1px;height:192.5px;background:#dcdcdc;"></div>
<div style="left:467.5px;top:410px;width:1px;height:55px;background:#dcdcdc;"></div>
<div style="left:310px;top:532.5px;width:1441px;height:1px;background:#d1d1d1;"></div>
<div style="left:310px;top:533.5px;width:1441px;height:28px;background:#f2f2f2;"></div>
<span class="t" style="left:324.85px;top:116.07px;font-size:13.75px;line-height:13.75px;color:#adadad;font-family:'DejaVu Sans Mono', 'Liberation Mono', monospace;">4</span>
<span class="t" style="left:324.85px;top:143.57px;font-size:13.75px;line-height:13.75px;color:#adadad;font-family:'DejaVu Sans Mono', 'Liberation Mono', monospace;">5</span>
<span class="t" style="left:324.85px;top:171.07px;font-size:13.75px;line-height:13.75px;color:#adadad;font-family:'DejaVu Sans Mono', 'Liberation Mono', monospace;">6</span>
<span class="t" style="left:324.85px;top:198.57px;font-size:13.75px;line-height:13.75px;color:#adadad;font-family:'DejaVu Sans Mono', 'Liberation Mono', monospace;">7</span>
<span class="t" style="left:324.85px;top:226.07px;font-size:13.75px;line-height:13.75px;color:#adadad;font-family:'DejaVu Sans Mono', 'Liberation Mono', monospace;">8</span>
<span class="t" style="left:324.85px;top:253.57px;font-size:13.75px;line-height:13.75px;color:#adadad;font-family:'DejaVu Sans Mono', 'Liberation Mono', monospace;">9</span>
<span class="t" style="left:316.60px;top:281.07px;font-size:13.75px;line-height:13.75px;color:#adadad;font-family:'DejaVu Sans Mono', 'Liberation Mono', monospace;">10</span>
<span class="t" style="left:316.60px;top:308.57px;font-size:13.75px;line-height:13.75px;color:#adadad;font-family:'DejaVu Sans Mono', 'Liberation Mono', monospace;">11</span>
<span class="t" style="left:316.60px;top:336.07px;font-size:13.75px;line-height:13.75px;color:#adadad;font-family:'DejaVu Sans Mono', 'Liberation Mono', monospace;">12</span>
<span class="t" style="left:316.60px;top:363.57px;font-size:13.75px;line-height:13.75px;color:#adadad;font-family:'DejaVu Sans Mono', 'Liberation Mono', monospace;">13</span>
<span class="t" style="left:316.60px;top:391.07px;font-size:13.75px;line-height:13.75px;color:#adadad;font-family:'DejaVu Sans Mono', 'Liberation Mono', monospace;">14</span>
<span class="t" style="left:316.60px;top:418.57px;font-size:13.75px;line-height:13.75px;color:#adadad;font-family:'DejaVu Sans Mono', 'Liberation Mono', monospace;">15</span>
<span class="t" style="left:316.60px;top:446.07px;font-size:13.75px;line-height:13.75px;color:#adadad;font-family:'DejaVu Sans Mono', 'Liberation Mono', monospace;">16</span>
<span class="t" style="left:389.00px;top:168.86px;font-size:16.6px;line-height:16.6px;color:#080808;font-family:'DejaVu Sans Mono', 'Liberation Mono', monospace;"><span style="color:#0033b3">class</span> TimingInput(TextInput):</span>
<span class="t" style="left:389.00px;top:196.36px;font-size:16.6px;line-height:16.6px;color:#080808;font-family:'DejaVu Sans Mono', 'Liberation Mono', monospace;">    pat = re.compile('[^0-9]')</span>
<span class="t" style="left:389.00px;top:251.36px;font-size:16.6px;line-height:16.6px;color:#080808;font-family:'DejaVu Sans Mono', 'Liberation Mono', monospace;">    <span style="color:#0033b3">def</span> insert_text(self, substring, from_undo=False):</span>
<span class="t" style="left:389.00px;top:278.86px;font-size:16.6px;line-height:16.6px;color:#080808;font-family:'DejaVu Sans Mono', 'Liberation Mono', monospace;">        cc, cr = self.cursor</span>
<span class="t" style="left:389.00px;top:306.36px;font-size:16.6px;line-height:16.6px;color:#080808;font-family:'DejaVu Sans Mono', 'Liberation Mono', monospace;">        text = self._lines[cr]</span>
<span class="t" style="left:389.00px;top:333.86px;font-size:16.6px;line-height:16.6px;color:#080808;font-family:'DejaVu Sans Mono', 'Liberation Mono', monospace;">        new_text = text[:cc] + substring + text[cc:]</span>
<span class="t" style="left:389.00px;top:388.86px;font-size:16.6px;line-height:16.6px;color:#080808;font-family:'DejaVu Sans Mono', 'Liberation Mono', monospace;">        <span style="color:#0033b3">if</span> self.pat.search(substring):</span>
<span class="t" style="left:389.00px;top:416.36px;font-size:16.6px;line-height:16.6px;color:#080808;font-family:'DejaVu Sans Mono', 'Liberation Mono', monospace;">            <span style="color:#0033b3">return</span></span>
<svg style="left:376.5px;top:172.0px;" width="11" height="14" viewBox="0 0 11 14"><path d="M0.500 0.500H10.500V8L5.500 13.500L0.500 8Z" fill="#fff" stroke="#c4c4c4"/><path d="M3 5.500H8" stroke="#b0b0b0"/></svg>
<svg style="left:376.5px;top:253.8px;" width="11" height="14" viewBox="0 0 11 14"><path d="M0.500 0.500H10.500V8L5.500 13.500L0.500 8Z" fill="#fff" stroke="#c4c4c4"/><path d="M3 5.500H8" stroke="#b0b0b0"/></svg>
<svg style="left:376.5px;top:415.2px;" width="11" height="14" viewBox="0 0 11 14"><path d="M0.500 13.500H10.500V6L5.500 0.500L0.500 6Z" fill="#fff" stroke="#c4c4c4"/><path d="M3 8.500H8" stroke="#b0b0b0"/></svg>
<svg style="left:345.5px;top:250.0px;" width="18" height="17" viewBox="0 0 18 17"><circle cx="6" cy="9" r="5.500" fill="#57b5d6"/><circle cx="6" cy="9" r="2.300" fill="none" stroke="#30576b" stroke-width="1.400"/><path d="M14.200 16V2.500M11.800 5.200L14.200 2.200L16.600 5.200" fill="none" stroke="#e0464c" stroke-width="1.300"/></svg>
<svg style="left:1664px;top:116px;" width="16" height="15" viewBox="0 0 16 15"><path d="M8 0.800L15.400 14.200H0.600Z" fill="#dbcfa8"/><rect x="7.200" y="5" width="1.700" height="5" fill="#fff"/><rect x="7.200" y="11" width="1.700" height="1.700" fill="#fff"/></svg>
<span class="t" style="left:1684.40px;top:116.91px;font-size:15px;line-height:15px;color:#8c8c8c;">1</span>
<svg style="left:1703.5px;top:119.5px;" width="13" height="9" viewBox="0 0 13 9"><path d="M1.200 7.500L6.500 2L11.800 7.500" fill="none" stroke="#6e6e6e" stroke-width="1.600"/></svg>
<svg style="left:1729px;top:119.5px;" width="13" height="9" viewBox="0 0 13 9"><path d="M1.200 1.500L6.500 7L11.800 1.500" fill="none" stroke="#6e6e6e" stroke-width="1.600"/></svg>
<div style="left:1738px;top:197px;width:12px;height:287.5px;background:rgba(110,110,110,0.22);"></div>
<div style="left:1734px;top:251px;width:17px;height:2px;background:#c8c8a4;"></div>
<div style="left:28px;top:561px;width:1723px;height:1px;background:#d1d1d1;"></div>
<div style="left:28px;top:562px;width:1723px;height:33.5px;background:#f2f2f2;"></div>
<div style="left:28px;top:595.5px;width:1723px;height:1px;background:#d1d1d1;"></div>
<span class="t" style="left:36.10px;top:572.21px;font-size:15px;line-height:15px;color:#000;transform:scaleX(0.8994);">Run:</span>
<svg style="left:88px;top:570px;opacity:.6" width="18" height="18" viewBox="0 0 18 18"><path d="M8.800 0.500c-3.400 0-3.700 1.400-3.700 2.700v1.800h3.900v.6H3.600C1.900 5.600.600 6.900.600 9.300s1.200 3.700 2.700 3.700h1.500v-2.100c0-1.500 1.300-2.700 2.800-2.700h3.800c1.200 0 2.200-1 2.200-2.300V3.200c0-1.300-1.300-2.700-4.800-2.700z" fill="#3d8fc4"/><path d="M9.200 17.500c3.400 0 3.700-1.400 3.700-2.700v-1.800H9v-.6h5.400c1.700 0 3-1.300 3-3.700s-1.200-3.700-2.700-3.700h-1.500v2.100c0 1.500-1.300 2.700-2.800 2.700H6.600c-1.200 0-2.200 1-2.200 2.300v2.700c0 1.300 1.300 2.700 4.800 2.700z" fill="#f8c63d"/></svg>
<span class="t" style="left:111.60px;top:572.21px;font-size:15px;line-height:15px;color:#000;transform:scaleX(1.0161);">dropwise</span>
<svg style="left:182.3px;top:575px;" width="10" height="10" viewBox="0 0 10 10"><path d="M1 1L9 9M9 1L1 9" stroke="#b0b0b0" stroke-width="1.200"/></svg>
<div style="left:72.5px;top:592px;width:133.5px;height:4px;background:#a3adc0;"></div>
<svg style="left:1693px;top:570px;" width="18" height="18" viewBox="0 0 18 18"><g transform="translate(9,9) scale(1)"><circle r="4.900" fill="none" stroke="#6e6e6e" stroke-width="3.600"/><g fill="#6e6e6e"><rect x="-1.900" y="-8.300" width="3.800" height="3.400"/><rect x="-1.900" y="4.900" width="3.800" height="3.400"/><rect x="-1.900" y="-8.300" width="3.800" height="3.400" transform="rotate(60)"/><rect x="-1.900" y="4.900" width="3.800" height="3.400" transform="rotate(60)"/><rect x="-1.900" y="-8.300" width="3.800" height="3.400" transform="rotate(120)"/><rect x="-1.900" y="4.900" width="3.800" height="3.400" transform="rotate(120)"/></g></g></svg>
<svg style="left:1726px;top:571px;" width="18" height="16" viewBox="0 0 18 16"><path d="M1.500 8H16.500" stroke="#6e6e6e" stroke-width="1.800"/></svg>
<div style="left:28px;top:596.5px;width:72.5px;height:331px;background:#f2f2f2;"></div>
<div style="left:63px;top:596.5px;width:1px;height:331px;background:#dcdcdc;"></div>
<div style="left:100px;top:596.5px;width:1px;height:331px;background:#dcdcdc;"></div>
<div style="left:101px;top:596.5px;width:1650px;height:331px;background:#fff;"></div>
<svg style="left:40px;top:606.5px;" width="14" height="15" viewBox="0 0 14 15"><path d="M0.800 0.500L13.200 7.500L0.800 14.500Z" fill="#4da35c"/></svg>
<div style="left:33px;top:634px;width:26px;height:1px;background:#dcdcdc;"></div>
<div style="left:40px;top:649px;width:12.5px;height:12.5px;background:#c4c4c4;"></div>
<div style="left:33px;top:675px;width:26px;height:1px;background:#dcdcdc;"></div>
<svg style="left:38px;top:689px;" width="16" height="14" viewBox="0 0 16 14"><rect x="0" y="0.500" width="7" height="5.500" fill="#6e6e6e"/><rect x="8.500" y="0.500" width="7.500" height="5.500" fill="#6e6e6e"/><rect x="0" y="7.500" width="16" height="5.500" fill="#6e6e6e"/></svg>
<div style="left:33px;top:716px;width:26px;height:1px;background:#dcdcdc;"></div>
<svg style="left:37px;top:729px;" width="18" height="18" viewBox="0 0 18 18"><path d="M10.500 0.800L17.200 7.500L14.800 8.200L11.800 11.200L11.200 14.500L3.500 6.800L6.800 6.200L9.800 3.200Z" fill="#6e6e6e"/><path d="M7.200 10.800L0.800 17.200" stroke="#6e6e6e" stroke-width="1.700"/></svg>
<svg style="left:75px;top:607px;" width="14" height="16" viewBox="0 0 14 16"><path d="M7 15.500V2M2 7L7 2L12 7" fill="none" stroke="#b4b4b4" stroke-width="2"/></svg>
<svg style="left:75px;top:640.5px;" width="14" height="16" viewBox="0 0 14 16"><path d="M7 0.500V14M2 9L7 14L12 9" fill="none" stroke="#b4b4b4" stroke-width="2"/></svg>
<svg style="left:74px;top:672px;" width="17" height="18" viewBox="0 0 17 18"><path d="M1 1.800H15.500M1 8H11.500C16.500 8 16.500 14.500 11.500 14.500H8" fill="none" stroke="#6e6e6e" stroke-width="2"/><path d="M10.200 11.300L6.500 14.500L10.200 17.700Z" fill="#6e6e6e"/><path d="M1 14.500H4.500" stroke="#6e6e6e" stroke-width="2"/></svg>
<div style="left:68.5px;top:699px;width:27px;height:27px;background:#d2d2d2;border-radius:5px;"></div>
<svg style="left:74px;top:704px;" width="17" height="17" viewBox="0 0 17 17"><path d="M0.500 4H6.500M0.500 9H6.500M0.500 15.500H16" stroke="#6e6e6e" stroke-width="2"/><path d="M11.500 0.500V11M7.500 7.500L11.500 11.500L15.500 7.500" fill="none" stroke="#6e6e6e" stroke-width="2"/></svg>
<svg style="left:73px;top:737px;" width="18" height="16" viewBox="0 0 18 16"><rect x="4" y="0" width="10" height="3.500" fill="#6e6e6e"/><path d="M0 5H18V12H14.500V9H3.500V12H0Z" fill="#6e6e6e"/><rect x="5" y="10.500" width="8" height="4.500" fill="none" stroke="#6e6e6e" stroke-width="1.500"/></svg>
<svg style="left:75px;top:768px;" width="14" height="17" viewBox="0 0 14 17"><rect x="4.500" y="0" width="5" height="2" fill="#6e6e6e"/><rect x="0.500" y="2" width="13" height="2.500" fill="#6e6e6e"/><path d="M1.500 5.500H12.500V16.500H1.500Z" fill="#6e6e6e"/></svg>
<span class="t" style="left:115.00px;top:605.16px;font-size:16.6px;line-height:16.6px;color:#7f1a1a;font-family:'DejaVu Sans Mono', 'Liberation Mono', monospace;">[<b style="color:#0f7f35">INFO</b>   ] [GL          ] Shading version &lt;b'4.60 NVIDIA'&gt;</span>
<span class="t" style="left:115.00px;top:632.66px;font-size:16.6px;line-height:16.6px;color:#7f1a1a;font-family:'DejaVu Sans Mono', 'Liberation Mono', monospace;">[<b style="color:#0f7f35">INFO</b>   ] [GL          ] Texture max size &lt;32768&gt;</span>
<span class="t" style="left:115.00px;top:660.16px;font-size:16.6px;line-height:16.6px;color:#7f1a1a;font-family:'DejaVu Sans Mono', 'Liberation Mono', monospace;">[<b style="color:#0f7f35">INFO</b>   ] [GL          ] Texture max units &lt;32&gt;</span>
<span class="t" style="left:115.00px;top:687.66px;font-size:16.6px;line-height:16.6px;color:#7f1a1a;font-family:'DejaVu Sans Mono', 'Liberation Mono', monospace;">[<b style="color:#0f7f35">INFO</b>   ] [Window      ] auto add sdl2 input provider</span>
<span class="t" style="left:115.00px;top:715.16px;font-size:16.6px;line-height:16.6px;color:#7f1a1a;font-family:'DejaVu Sans Mono', 'Liberation Mono', monospace;">[<b style="color:#0f7f35">INFO</b>   ] [Window      ] virtual keyboard not allowed, single mode, not docked</span>
<span class="t" style="left:115.00px;top:742.66px;font-size:16.6px;line-height:16.6px;color:#7f1a1a;font-family:'DejaVu Sans Mono', 'Liberation Mono', monospace;">[<b style="color:#0f7f35">INFO</b>   ] [Text        ] Provider: sdl2</span>
<span class="t" style="left:115.00px;top:770.16px;font-size:16.6px;line-height:16.6px;color:#7f1a1a;font-family:'DejaVu Sans Mono', 'Liberation Mono', monospace;">[<b style="color:#0f7f35">INFO</b>   ] [GL          ] NPOT texture support is available</span>
<span class="t" style="left:115.00px;top:797.66px;font-size:16.6px;line-height:16.6px;color:#7f1a1a;font-family:'DejaVu Sans Mono', 'Liberation Mono', monospace;">[<b style="color:#0f7f35">INFO</b>   ] [Base        ] Start application main loop</span>
<span class="t" style="left:115.00px;top:825.16px;font-size:16.6px;line-height:16.6px;color:#7f1a1a;font-family:'DejaVu Sans Mono', 'Liberation Mono', monospace;">[<b style="color:#0f7f35">INFO</b>   ] [Base        ] Leaving application in progress...</span>
<span class="t" style="left:115.00px;top:880.16px;font-size:16.6px;line-height:16.6px;color:#1a1a80;font-family:'DejaVu Sans Mono', 'Liberation Mono', monospace;">Process finished with exit code 0</span>
<div style="left:116px;top:915.5px;width:1479px;height:11.5px;background:#e6e6e6;"></div>
<div style="left:1738px;top:795px;width:11.5px;height:125px;background:#e3e3e3;"></div>
<div style="left:0px;top:927.5px;width:1751px;height:1px;background:#d1d1d1;"></div>
<div style="left:1px;top:928.5px;width:1749px;height:27px;background:#f2f2f2;"></div>
<div style="left:28px;top:928.5px;width:65px;height:27px;background:#c7c7c7;"></div>
<div style="left:0px;top:955.5px;width:1751px;height:1px;background:#d1d1d1;"></div>
<div style="left:1px;top:956.5px;width:1749px;height:24.5px;background:#f2f2f2;"></div>
<svg style="left:41px;top:937.5px;" width="11" height="12" viewBox="0 0 11 12"><path d="M0.500 0.500L10.500 6L0.500 11.500Z" fill="#6e6e6e"/></svg>
<span class="t" style="left:61.00px;top:937.58px;font-size:13.5px;line-height:13.5px;color:#000;transform:scaleX(0.8883);">Run</span>
<svg style="left:108px;top:937px;" width="14" height="12" viewBox="0 0 14 12"><path d="M0 1.500H2.500M4.500 1.500H13.500M0 6H2.500M4.500 6H13.500M0 10.500H2.500M4.500 10.500H13.500" stroke="#6e6e6e" stroke-width="1.800"/></svg>
<span class="t" style="left:127.00px;top:937.58px;font-size:13.5px;line-height:13.5px;color:#000;transform:scaleX(0.9183);">TODO</span>
<svg style="left:190px;top:935.8px;" width="14" height="14" viewBox="0 0 14 14"><circle cx="7" cy="7" r="6.500" fill="#6e6e6e"/><rect x="6.100" y="2.800" width="1.800" height="5.200" fill="#fff"/><rect x="6.100" y="9.300" width="1.800" height="1.900" fill="#fff"/></svg>
<span class="t" style="left:209.40px;top:937.58px;font-size:13.5px;line-height:13.5px;color:#000;transform:scaleX(0.9784);">Problems</span>
<svg style="left:293px;top:935.5px;" width="17" height="16" viewBox="0 0 17 16"><path d="M8.500 0.500L16.500 4.300L8.500 8.100L0.500 4.300Z" fill="#6e6e6e"/><path d="M1.500 8L8.500 11.300L15.500 8M1.500 11.500L8.500 14.800L15.500 11.500" fill="none" stroke="#6e6e6e" stroke-width="1.500"/></svg>
<span class="t" style="left:314.70px;top:937.58px;font-size:13.5px;line-height:13.5px;color:#000;transform:scaleX(0.9279);">Python Packages</span>
<svg style="left:440px;top:936px;" width="15" height="14" viewBox="0 0 15 14"><rect width="15" height="13.500" rx="1.500" fill="#6e6e6e"/><path d="M3 3.500L6.500 6.500L3 9.500M7.500 10H11.500" fill="none" stroke="#fff" stroke-width="1.400"/></svg>
<span class="t" style="left:460.90px;top:937.58px;font-size:13.5px;line-height:13.5px;color:#000;transform:scaleX(0.9840);">Terminal</span>
<svg style="left:536px;top:935.5px;" width="16" height="16" viewBox="0 0 16 16"><path d="M2.200 9.500C-0.500 4.500 4 1.200 9 1.500C13 1.800 14.800 4.200 13.800 6.200" fill="none" stroke="#7d7d7d" stroke-width="2.200"/><text x="4.600" y="15.200" font-family="Liberation Sans, sans-serif" font-weight="700" font-size="12.500" fill="#6e6e6e">R</text></svg>
<span class="t" style="left:556.40px;top:937.58px;font-size:13.5px;line-height:13.5px;color:#000;transform:scaleX(0.9440);">R Console</span>
<svg style="left:644px;top:935.5px;" width="16" height="16" viewBox="0 0 18 18"><path d="M8.800 0.500c-3.400 0-3.700 1.400-3.700 2.700v1.800h3.900v.6H3.600C1.900 5.600.600 6.900.600 9.300s1.200 3.700 2.700 3.700h1.500v-2.100c0-1.500 1.300-2.700 2.800-2.700h3.800c1.200 0 2.200-1 2.200-2.300V3.200c0-1.300-1.300-2.700-4.800-2.700z" fill="#6e6e6e"/><path d="M9.200 17.500c3.400 0 3.700-1.400 3.700-2.700v-1.800H9v-.6h5.400c1.700 0 3-1.300 3-3.700s-1.200-3.700-2.700-3.700h-1.500v2.100c0 1.500-1.300 2.700-2.800 2.700H6.600c-1.200 0-2.200 1-2.200 2.300v2.700c0 1.300 1.300 2.700 4.800 2.700z" fill="#8a8a8a"/></svg>
<span class="t" style="left:664.40px;top:937.58px;font-size:13.5px;line-height:13.5px;color:#000;transform:scaleX(0.9506);">Python Console</span>
<svg style="left:781px;top:935.5px;" width="16" height="16" viewBox="0 0 16 16"><path d="M2.200 9.500C-0.500 4.500 4 1.200 9 1.500C13 1.800 14.800 4.200 13.800 6.200" fill="none" stroke="#7d7d7d" stroke-width="2.200"/><text x="4.600" y="15.200" font-family="Liberation Sans, sans-serif" font-weight="700" font-size="12.500" fill="#6e6e6e">R</text></svg>
<span class="t" style="left:801.90px;top:937.58px;font-size:13.5px;line-height:13.5px;color:#000;transform:scaleX(0.9350);">R Jobs</span>
<svg style="left:1631px;top:934.5px;" width="18" height="17" viewBox="0 0 18 17"><path d="M3 14.500C-2 7 4 1 9.500 1C14 1 16.500 4 16.500 8.500V15.500H8C6 15.500 4.500 15.300 3 14.500Z" fill="none" stroke="#6e6e6e" stroke-width="1.500"/></svg>
<span class="t" style="left:1653.40px;top:937.58px;font-size:13.5px;line-height:13.5px;color:#000;transform:scaleX(0.9474);">Event Log</span>
<svg style="left:8px;top:961px;" width="16" height="16" viewBox="0 0 16 16"><rect x="3.500" y="0.500" width="12" height="12" fill="none" stroke="#6e6e6e"/><path d="M0.500 3.500V15.500H12.500" fill="none" stroke="#6e6e6e"/></svg>
<span class="t" style="left:1385.40px;top:961.51px;font-size:15px;line-height:15px;color:#000;transform:scaleX(0.8475);">CRLF</span>
<span class="t" style="left:1433.20px;top:961.51px;font-size:15px;line-height:15px;color:#000;transform:scaleX(0.9482);">UTF-8</span>
<span class="t" style="left:1486.00px;top:961.51px;font-size:15px;line-height:15px;color:#000;transform:scaleX(0.9593);">4 spaces</span>
<span class="t" style="left:1558.40px;top:961.51px;font-size:15px;line-height:15px;color:#000;transform:scaleX(0.9813);">Python 3.8 (DropWise)</span>
<svg style="left:1719px;top:961px;" width="16" height="15" viewBox="0 0 16 15"><path d="M2.500 7V4.500C2.500 0.500 8.500 0.500 8.500 4.500" fill="none" stroke="#6e6e6e" stroke-width="1.600"/><rect x="5.500" y="7" width="9.500" height="7.500" fill="#6e6e6e"/></svg>
<div style="left:492px;top:124px;width:1002px;height:640px;background:#000;box-shadow:0 1px 6px rgba(0,0,0,.10);"></div>
<div style="left:492px;top:124px;width:1002px;height:1px;background:#4c4c4c;"></div>
<div style="left:492px;top:124px;width:1px;height:640px;background:#3a3a3a;"></div>
<div style="left:1493px;top:124px;width:1px;height:640px;background:#3a3a3a;"></div>
<div style="left:493px;top:125px;width:1000px;height:38px;background:#fff;"></div>
<svg style="left:504px;top:134px;" width="19" height="19" viewBox="0 0 19 19"><circle cx="9.500" cy="9.500" r="9.300" fill="#3b3b3b"/><path d="M3.200 6L6.800 12.800L8 6.800Z M8.800 6.500L10 13L15.800 7.800L11.500 9.200Z M7.200 13.200L8.300 7.500L9.300 13.300Z" fill="#fff"/></svg>
<span class="t" style="left:528.00px;top:136.21px;font-size:15px;line-height:15px;color:#000;transform:scaleX(1.0082);">DropWise</span>
<svg style="left:1334px;top:131px;" width="24" height="24" viewBox="0 0 24 24"><path d="M6 12.200H18" stroke="#000" stroke-width="1.200"/></svg>
<svg style="left:1392px;top:132px;" width="24" height="24" viewBox="0 0 24 24"><rect x="6.500" y="6.500" width="11" height="11" fill="none" stroke="#000" stroke-width="1.200"/></svg>
<svg style="left:1451px;top:132px;" width="24" height="24" viewBox="0 0 24 24"><path d="M6.500 6.500L18 18M18 6.500L6.500 18" stroke="#000" stroke-width="1.200"/></svg>
<div style="left:493px;top:163px;width:1000px;height:60px;background:#222222;"></div>
<div style="left:493px;top:218.8px;width:1000px;height:5.2px;background:linear-gradient(#202020,#1b1b1b 40%,#1a1a1a 80%,#080808);"></div>
<svg style="left:515.7px;top:168px;" width="52" height="52" viewBox="0 0 52 52"><circle cx="26" cy="26" r="24.900" fill="#fff"/><path d="M25.800 6.800C26.500 12 28 15 30.500 19C34 24.500 39.100 29 39.100 35.500C39.100 43 33 49 25.800 49C18.600 49 12.600 43 12.600 35.500C12.600 29 17.500 24.500 21 19C23.500 15 25 12 25.800 6.800Z" fill="#33a3cf"/><path d="M30.900 26.600C38 31 37.800 41.500 28.600 44.600C35.300 40.800 35.900 32.300 30.900 26.600Z" fill="#081820" stroke="#081820" stroke-width="0.900" stroke-linejoin="round"/></svg>
<span class="t" style="left:572.90px;top:184.97px;font-size:18px;line-height:18px;color:#f0f0f0;transform:scaleX(1.0340);">DropWise</span>
<svg style="left:1231px;top:166px;" width="50" height="56" viewBox="0 0 50 56"><path d="M24.800 6.300L42.600 23H29.500V39.300A4.700 4.700 0 0 1 20.100 39.300V23H7Z" fill="#33a7d4" stroke="#33a7d4" stroke-width="1.500" stroke-linejoin="round"/><rect x="2" y="46" width="45" height="7.200" rx="3.600" fill="#5a5a5a"/></svg>
<svg style="left:1303px;top:166px;" width="50" height="56" viewBox="0 0 50 56"><path d="M25.200 41.800L43.300 26.700H29.600V9.500A4.400 4.400 0 0 0 20.800 9.500V26.700H6.500Z" fill="#33a7d4" stroke="#33a7d4" stroke-width="1.500" stroke-linejoin="round"/><rect x="2.500" y="46" width="45" height="7.200" rx="3.600" fill="#5a5a5a"/></svg>
<svg style="left:1410px;top:165px;" width="52" height="58" viewBox="0 0 52 58"><path d="M7 8.200C7 5.200 9.500 3.700 12 5L47.600 26.400C49.800 27.900 49.800 30.900 47.600 32.400L12 54C9.500 55.300 7 53.800 7 50.800Z" fill="#46d140" stroke="#46d140" stroke-width="2" stroke-linejoin="round"/></svg>
<div style="left:505.5px;top:227.0px;width:974.8px;height:149.6px;background:#262738;border-radius:11px;"></div>
<div style="left:517px;top:240.0px;width:110px;height:36px;background:#33a7d4;border-radius:2px;"></div>
<span class="t" style="left:528.90px;top:247.50px;font-size:24px;line-height:24px;color:#fff;transform:scaleX(1.0580);">Ventil 1</span>
<svg style="left:1419px;top:250.4px;" width="48" height="48" viewBox="0 0 48 48"><rect width="48" height="48" rx="2" fill="#585858"/><path d="M10.500 27H35M22.800 14.500V41" stroke="#fff" stroke-width="4.300"/></svg>
<svg style="left:1418.5px;top:308.5px;" width="49" height="49" viewBox="0 0 49 49"><rect width="49" height="49" rx="2" fill="#585858"/><g fill="none" stroke="#fff" stroke-width="2"><path d="M18.200 9.700V5.700H28.300V9.700"/><path d="M9 10.700H38.300L41.200 15.200H5.200Z" stroke-linejoin="round"/><path d="M4.300 15.700H42.100" stroke-width="2.100"/><path d="M9.600 16.700L12.500 43.200H34.700L37.600 16.700" stroke-linejoin="round"/><path d="M16.800 20.700V37.100M23.200 20.700V37.100M29.600 20.700V37.100" stroke-width="2.200"/></g></svg>
<div style="left:505.5px;top:382.05px;width:974.8px;height:149.6px;background:#262738;border-radius:11px;"></div>
<div style="left:517px;top:395.05px;width:110px;height:36px;background:#33a7d4;border-radius:2px;"></div>
<span class="t" style="left:528.90px;top:402.55px;font-size:24px;line-height:24px;color:#fff;transform:scaleX(1.0948);">Ventil 2</span>
<svg style="left:1419px;top:405.45px;" width="48" height="48" viewBox="0 0 48 48"><rect width="48" height="48" rx="2" fill="#585858"/><path d="M10.500 27H35M22.800 14.500V41" stroke="#fff" stroke-width="4.300"/></svg>
<svg style="left:1418.5px;top:463.55px;" width="49" height="49" viewBox="0 0 49 49"><rect width="49" height="49" rx="2" fill="#585858"/><g fill="none" stroke="#fff" stroke-width="2"><path d="M18.200 9.700V5.700H28.300V9.700"/><path d="M9 10.700H38.300L41.200 15.200H5.200Z" stroke-linejoin="round"/><path d="M4.300 15.700H42.100" stroke-width="2.100"/><path d="M9.600 16.700L12.500 43.200H34.700L37.600 16.700" stroke-linejoin="round"/><path d="M16.800 20.700V37.100M23.200 20.700V37.100M29.600 20.700V37.100" stroke-width="2.200"/></g></svg>
<div style="left:505.5px;top:537.1px;width:974.8px;height:149.6px;background:#262738;border-radius:11px;"></div>
<div style="left:517px;top:550.1px;width:110px;height:36px;background:#33a7d4;border-radius:2px;"></div>
<span class="t" style="left:528.90px;top:557.60px;font-size:24px;line-height:24px;color:#fff;transform:scaleX(1.0847);">Ventil 3</span>
<svg style="left:1419px;top:560.5px;" width="48" height="48" viewBox="0 0 48 48"><rect width="48" height="48" rx="2" fill="#585858"/><path d="M10.500 27H35M22.800 14.500V41" stroke="#fff" stroke-width="4.300"/></svg>
<svg style="left:1418.5px;top:618.6px;" width="49" height="49" viewBox="0 0 49 49"><rect width="49" height="49" rx="2" fill="#585858"/><g fill="none" stroke="#fff" stroke-width="2"><path d="M18.200 9.700V5.700H28.300V9.700"/><path d="M9 10.700H38.300L41.200 15.200H5.200Z" stroke-linejoin="round"/><path d="M4.300 15.700H42.100" stroke-width="2.100"/><path d="M9.600 16.700L12.500 43.200H34.700L37.600 16.700" stroke-linejoin="round"/><path d="M16.800 20.700V37.100M23.200 20.700V37.100M29.600 20.700V37.100" stroke-width="2.200"/></g></svg>
<div style="left:505.5px;top:692px;width:974.8px;height:65.6px;background:#262738;border-radius:11px;"></div>
<div style="left:516.6px;top:706px;width:110px;height:36px;background:#33a7d4;border-radius:2px;"></div>
<span class="t" style="left:526.90px;top:713.50px;font-size:24px;line-height:24px;color:#fff;transform:scaleX(1.0506);">Kamera</span>
<div style="left:866px;top:706px;width:110px;height:36px;background:#33a7d4;border-radius:2px;"></div>
<span class="t" style="left:884.90px;top:713.50px;font-size:24px;line-height:24px;color:#fff;transform:scaleX(1.0358);">Blitz 1</span>
<div style="left:984.5px;top:706px;width:110px;height:36px;background:#33a7d4;border-radius:2px;"></div>
<span class="t" style="left:1003.90px;top:713.50px;font-size:24px;line-height:24px;color:#fff;transform:scaleX(1.0435);">Blitz 2</span>
<div style="left:1103px;top:706px;width:110px;height:36px;background:#33a7d4;border-radius:2px;"></div>
<span class="t" style="left:1122.40px;top:713.50px;font-size:24px;line-height:24px;color:#fff;transform:scaleX(1.0435);">Blitz 3</span>
<div style="left:641.3px;top:700px;width:169.30000000000007px;height:47.5px;background:#1e1e1e;border-radius:12px;box-shadow:0 0 2.500px 1px #1e1e1e;"></div>
<div style="left:649.3px;top:706px;width:35px;height:35.5px;background:#585858;border-radius:2px;"></div>
<div style="left:656.3px;top:723.7px;width:20.5px;height:3.3px;background:#fff;"></div>
<div style="left:688.2px;top:706px;width:78.8px;height:35.5px;background:linear-gradient(#dcdcdc,#ececec 30%,#fff 62%);border-radius:1px;"></div>
<span class="t" style="left:699.60px;top:711.96px;font-size:27px;line-height:27px;color:#a2a2a2;transform:scaleX(1.0941);">Start</span>
<div style="left:770.7px;top:706px;width:35px;height:35.5px;background:#585858;border-radius:2px;"></div>
<div style="left:780.2px;top:723.7px;width:15.5px;height:3.3px;background:#fff;"></div>
<div style="left:786.2px;top:718px;width:3.5px;height:16px;background:#fff;"></div>
<div style="left:1218.1px;top:700px;width:165.9000000000001px;height:47.5px;background:#1e1e1e;border-radius:12px;box-shadow:0 0 2.500px 1px #1e1e1e;"></div>
<div style="left:1222.8px;top:706px;width:35px;height:35.5px;background:#585858;border-radius:2px;"></div>
<div style="left:1229.8px;top:723.7px;width:20.5px;height:3.3px;background:#fff;"></div>
<div style="left:1261.7px;top:706px;width:79px;height:35.5px;background:linear-gradient(#dcdcdc,#ececec 30%,#fff 62%);border-radius:1px;"></div>
<span class="t" style="left:1267.90px;top:711.96px;font-size:27px;line-height:27px;color:#a2a2a2;transform:scaleX(1.0804);">Delta</span>
<div style="left:1344.1px;top:706px;width:35px;height:35.5px;background:#585858;border-radius:2px;"></div>
<div style="left:1353.6px;top:723.7px;width:15.5px;height:3.3px;background:#fff;"></div>
<div style="left:1359.6px;top:718px;width:3.5px;height:16px;background:#fff;"></div>
</div></body></html>
